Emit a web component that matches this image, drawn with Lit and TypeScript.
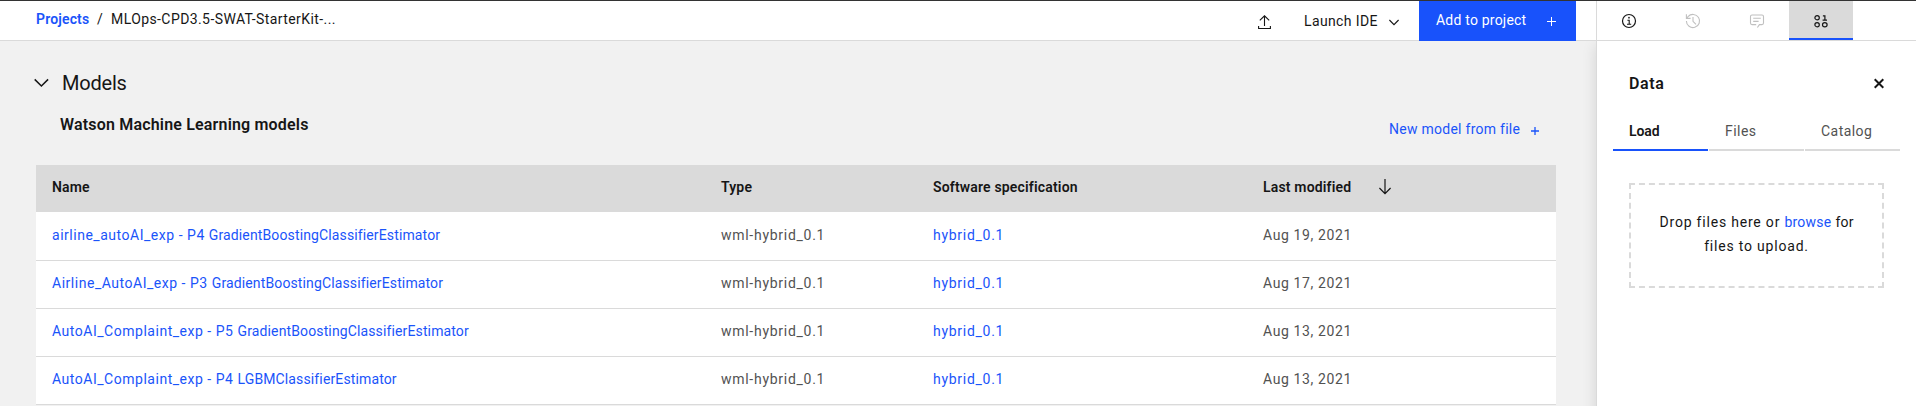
import { LitElement, html, css, svg } from "lit";
import { customElement, state } from "lit/decorators.js";
import { classMap } from "lit/directives/class-map.js";

interface Model {
  experiment: string;
  estimator: string;
  type: string;
  spec: string;
  modified: string;
}

const MODELS: Model[] = [
  { experiment: "airline_autoAI_exp - P4", estimator: "GradientBoostingClassifierEstimator", type: "wml-hybrid_0.1", spec: "hybrid_0.1", modified: "Aug 19, 2021" },
  { experiment: "Airline_AutoAI_exp - P3", estimator: "GradientBoostingClassifierEstimator", type: "wml-hybrid_0.1", spec: "hybrid_0.1", modified: "Aug 17, 2021" },
  { experiment: "AutoAI_Complaint_exp - P5", estimator: "GradientBoostingClassifierEstimator", type: "wml-hybrid_0.1", spec: "hybrid_0.1", modified: "Aug 13, 2021" },
  { experiment: "AutoAI_Complaint_exp - P4", estimator: "LGBMClassifierEstimator", type: "wml-hybrid_0.1", spec: "hybrid_0.1", modified: "Aug 13, 2021" },
];

const base = css`
  :host {
    display: block;
    box-sizing: border-box;
    font: 400 14px/20px Roboto, "Noto Sans", sans-serif;
    color: #161616;
  }
  *, *::before, *::after { box-sizing: border-box; }
  svg { display: block; flex: none; fill: none; stroke: currentColor; }
  a { color: #1a54fa; text-decoration: none; }
`;

@customElement("project-header")
class ProjectHeader extends LitElement {
  static styles = [base, css`
    :host { background: #fff; border-bottom: 1px solid #dadada; height: 40px; }
    .bar { display: flex; height: 40px; padding: 0 20px 0 36px; white-space: nowrap; }
    .crumbs { display: flex; flex: 1; padding-top: 8px; }
    .root { font-weight: 600; letter-spacing: 0.16px; width: 61px; }
    .sep { width: 14px; }
    .current { letter-spacing: 0.41px; }
    .upload { padding: 14px 0 0; width: 46px; }
    .ide { display: flex; padding-top: 10px; width: 115px; letter-spacing: 0.38px; }
    .ide span { width: 85px; }
    .ide svg { margin-top: 8px; }
    .add { display: flex; width: 157px; height: 40px; padding: 9px 0 0 17px; background: #1852fb; color: #fff; letter-spacing: 0.21px; }
    .add span { width: 111px; }
    .add svg { margin-top: 7px; }
  `];

  render() {
    return html`<div class="bar">
      <nav class="crumbs"><a class="root">Projects</a><span class="sep">/</span><span class="current">MLOps-CPD3.5-SWAT-StarterKit-...</span></nav>
      <div class="upload"><svg width="13" height="15" viewBox="0 0 13 15"><path d="M6.5 11V1M1.8 5.4L6.5 .8l4.7 4.6M.6 11v2.5h11.8V11" stroke-width="1.1"/></svg></div>
      <div class="ide"><span>Launch IDE</span><svg width="10" height="7" viewBox="0 0 10 7"><path d="M.4 1L5 5.7 9.6 1" stroke-width="1.1"/></svg></div>
      <div class="add"><span>Add to project</span><svg width="9" height="9" viewBox="0 0 9 9"><path d="M4.5 0v9M0 4.5h9"/></svg></div>
    </div>`;
  }
}

@customElement("models-section")
class ModelsSection extends LitElement {
  static styles = [base, css`
    :host { background: #f1f1f1; flex: 1; padding: 28px 40px 0 34px; min-height: 0; overflow: hidden; white-space: nowrap; }
    .title { display: flex; height: 28px; font-size: 20px; line-height: 28px; letter-spacing: -0.2px; }
    .title svg { margin: 9px 12px 0 0; }
    .sub { display: flex; justify-content: space-between; height: 68px; padding: 15px 17px 0 26px; }
    .heading { padding-top: 1px; font-size: 16px; line-height: 24px; font-weight: 600; letter-spacing: 0.18px; }
    .create { display: flex; padding-top: 7px; letter-spacing: 0.265px; }
    .create span { width: 142px; }
    .create svg { margin-top: 8px; }
    .table { margin-left: 2px; }
    .row { display: grid; grid-template-columns: 669px 212px 330px 1fr; height: 48px; padding: 12px 0 0 16px; background: #fff; border-bottom: 1px solid #dadada; color: #525252; }
    .row.first { height: 49px; padding-top: 13px; }
    .row.head { height: 47px; padding-top: 12px; background: #dadada; color: #161616; font-weight: 600; letter-spacing: 0.17px; border: 0; }
    .name { letter-spacing: 0.52px; }
    .estimator { letter-spacing: 0.13px; }
    .type, .spec { letter-spacing: 0.72px; }
    .date { letter-spacing: 0.62px; }
    .sort { display: flex; }
    .sort span { width: 116px; }
    .sort svg { margin-top: 2px; }
  `];

  render() {
    return html`
      <div class="title"><svg width="16" height="10" viewBox="0 0 16 10"><path d="M.7 1.4L7.4 8l6.7-6.6" stroke-width="1.5"/></svg>Models</div>
      <div class="sub">
        <div class="heading">Watson Machine Learning models</div>
        <a class="create"><span>New model from file</span><svg width="8" height="8" viewBox="0 0 8 8"><path d="M4 0v8M0 4h8" stroke-width="1.3"/></svg></a>
      </div>
      <div class="table">
        <div class="row head"><div>Name</div><div>Type</div><div>Software specification</div>
          <div class="sort"><span>Last modified</span><svg width="12" height="16" viewBox="0 0 12 16"><path d="M6 0v14.5M.4 9L6 14.7 11.6 9" stroke-width="1.2"/></svg></div></div>
        ${MODELS.map((m, i) => html`<div class=${classMap({ row: true, first: i === 0 })}>
          <a class="name">${m.experiment} <span class="estimator">${m.estimator}</span></a><div class="type">${m.type}</div><a class="spec">${m.spec}</a><div class="date">${m.modified}</div>
        </div>`)}
      </div>`;
  }
}

const TOOL_ICONS = [
  { id: "info", dim: false, icon: svg`<circle cx="8" cy="8" r="6.5" stroke-width="1.2"/><path d="M6.4 7.2H8.2V11M6 11.2h4.2" stroke-width="1.1"/><circle cx="8" cy="4.7" r=".85" fill="currentColor" stroke="none"/>` },
  { id: "history", dim: true, icon: svg`<path d="M1.4 8A6.6 6.6 0 1 0 3 3.7L1.6 5.2M1.4 1.2v4.2h4.2M8 4v4.3l3 3" stroke-width="1.1"/>` },
  { id: "comments", dim: true, icon: svg`<path d="M7.2 11.6H3a1.5 1.5 0 0 1-1.5-1.5V3.5A1.5 1.5 0 0 1 3 2h10a1.5 1.5 0 0 1 1.5 1.5v6.6a1.5 1.5 0 0 1-1.5 1.5h-2.6l-2 2.9M4.2 5.3h7.6M4.2 8.4h5.4" stroke-width="1.1"/>` },
  { id: "data", dim: false, icon: svg`<ellipse cx="4.1" cy="4.7" rx="2.2" ry="2.1" stroke-width="1.2"/><path d="M9.9 2.9h2v4.2M9.6 7.1h4.4" stroke-width="1.2"/><ellipse cx="4.1" cy="11.7" rx="2.2" ry="2.1" stroke-width="1.2"/><ellipse cx="11.8" cy="11.7" rx="2.3" ry="2.1" stroke-width="1.2"/>` },
];

@customElement("data-panel")
class DataPanel extends LitElement {
  @state() tab = "Load";

  static styles = [base, css`
    :host { display: flex; flex-direction: column; width: 320px; border-left: 1px solid #dadada; background: #fff; box-shadow: 0 44px 14px rgba(0, 0, 0, 0.12); }
    .tools { display: flex; height: 40px; border-bottom: 1px solid #dadada; background: #fff; }
    .tool { display: flex; justify-content: center; width: 64px; height: 39px; padding-top: 12px; }
    .tool.dim { color: #c0c0c0; }
    .tool.active { background: #dadada; border-bottom: 2px solid #1852fb; }
    .top { display: flex; justify-content: space-between; padding: 31px 32px 0; height: 80px; font-size: 16px; line-height: 24px; font-weight: 600; letter-spacing: 0.6px; }
    .top svg { margin-top: 6px; }
    .tabs { display: grid; grid-template-columns: repeat(3, 1fr); gap: 1px; padding: 0 16px; }
    .tab { height: 30px; padding-left: 16px; border-bottom: 2px solid #dadada; color: #525252; letter-spacing: 0.45px; }
    .tab.on { border-color: #1852fb; color: #161616; font-weight: 600; letter-spacing: -0.1px; }
    .drop { margin: 32px 32px 0; height: 105px; padding-top: 25px; border: 2px dashed #dadada; text-align: center; line-height: 24px; letter-spacing: 0.8px; white-space: nowrap; }
    .drop a { letter-spacing: 0.2px; }
    .tail { letter-spacing: 0.1px; }
  `];

  render() {
    return html`
      <div class="tools">${TOOL_ICONS.map(t => html`<div class=${classMap({ tool: true, dim: t.dim, active: t.id === "data" })}>
        <svg width="16" height="16" viewBox="0 0 16 16">${t.icon}</svg></div>`)}</div>
      <div class="top"><span>Data</span><svg width="10" height="11" viewBox="0 0 10 11"><path d="M.7 1.2l8.6 8.6M9.3 1.2L.7 9.8" stroke-width="2"/></svg></div>
      <div class="tabs">${["Load", "Files", "Catalog"].map(t => html`<div class=${classMap({ tab: true, on: t === this.tab })} @click=${() => (this.tab = t)}>${t}</div>`)}</div>
      <div class="drop">Drop files here or <a>browse</a> <span class="tail">for</span><br>files to upload.</div>`;
  }
}

@customElement("app-root")
class AppRoot extends LitElement {
  static styles = [base, css`
    :host { height: 406px; border-top: 1px solid #333; background: #fff; overflow: hidden; }
    .layout { display: flex; height: 405px; }
    .left { display: flex; flex-direction: column; flex: 1; min-width: 0; }
    project-header { position: relative; z-index: 2; }
    data-panel { position: relative; z-index: 1; }
  `];

  render() {
    return html`<div class="layout">
      <div class="left"><project-header></project-header><models-section></models-section></div>
      <data-panel></data-panel>
    </div>`;
  }
}
